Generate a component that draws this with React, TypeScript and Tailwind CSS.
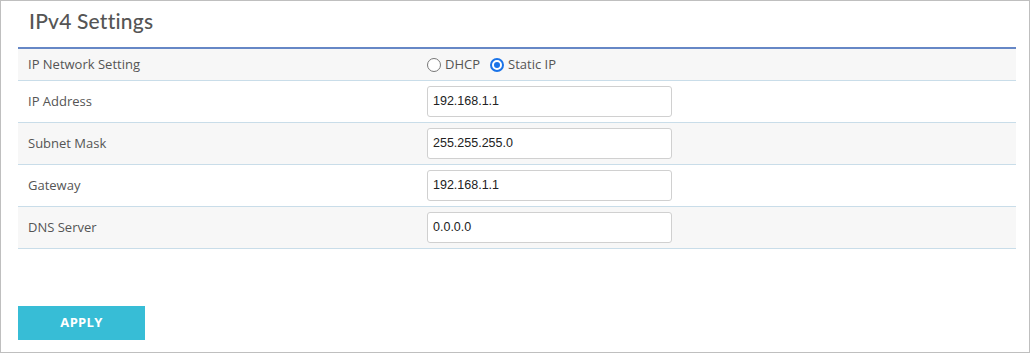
import React from "react";

const rows = [
  { label: "IP Address", value: "192.168.1.1", bg: "bg-white" },
  { label: "Subnet Mask", value: "255.255.255.0", bg: "bg-[#f7f7f7]" },
  { label: "Gateway", value: "192.168.1.1", bg: "bg-white" },
  { label: "DNS Server", value: "0.0.0.0", bg: "bg-[#f7f7f7]" },
];

export default function App() {
  return (
    <div className="w-[1030px] h-[353px] border border-[#bfbfbf] bg-white box-border flex flex-col font-['Open_Sans',sans-serif]">
      <div className="h-[46px] pl-[28px] pt-[6px]">
        <h1 className="text-[21px] leading-[28px] text-[#555] font-medium tracking-[0.2px] font-['Lato','Open_Sans',sans-serif]">
          IPv4 Settings
        </h1>
      </div>
      <div className="ml-[17px] w-[998px] border-t-2 border-[#6687c6]">
        <div className="flex h-[32px] bg-[#f7f7f7] border-b border-[#c9dde9] items-center">
          <div className="w-[399px] pl-[10px] text-[13px] text-[#555]">IP Network Setting</div>
          <div className="flex items-center pl-[10px] text-[13px] text-[#555]">
            <span className="w-[14px] h-[14px] rounded-full border-[1.5px] border-[#777] bg-white box-border"></span>
            <span className="ml-[4px]">DHCP</span>
            <span className="ml-[10px] w-[14px] h-[14px] rounded-full border-2 border-[#1a73e8] bg-white box-border flex items-center justify-center">
              <span className="w-[6px] h-[6px] rounded-full bg-[#1a73e8]"></span>
            </span>
            <span className="ml-[4px]">Static IP</span>
          </div>
        </div>
        {rows.map((r) => (
          <div key={r.label} className={`flex h-[42px] items-center border-b border-[#c9dde9] ${r.bg}`}>
            <div className="w-[399px] pl-[10px] text-[13px] text-[#555]">{r.label}</div>
            <div className="pl-[10px]">
              <div className="w-[245px] h-[31px] border border-[#d0d0d0] rounded-[3px] bg-white flex items-center pl-[5px] text-[12.5px] text-[#222] font-['Liberation_Sans',Arial,sans-serif]">
                {r.value}
              </div>
            </div>
          </div>
        ))}
      </div>
      <div className="ml-[17px] mt-[57px]">
        <button className="w-[127px] h-[34px] bg-[#37bdd6] text-white text-[13px] font-bold tracking-[0.3px] uppercase">
          Apply
        </button>
      </div>
    </div>
  );
}
